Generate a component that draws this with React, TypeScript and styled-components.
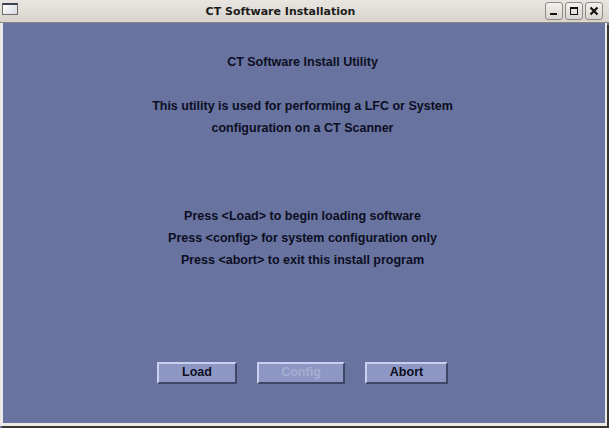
import React from "react";
import styled, { createGlobalStyle } from "styled-components";

const Global = createGlobalStyle`
  html, body { margin: 0; padding: 0; background: #3a3530; }
  body { width: 609px; height: 428px; overflow: hidden; }
`;

const Window = styled.div`
  width: 609px;
  height: 428px;
  display: flex;
  flex-direction: column;
  box-sizing: border-box;
  background: #6873a0;
`;

const TitleBar = styled.div`
  flex: none;
  display: flex;
  align-items: center;
  padding: 0 6px 0 2px;
  background: linear-gradient(#e9e6e2, #d8d3cc);
  border-bottom: 1px solid #8a8782;
  box-sizing: border-box;
  height: 23px;
`;

const AppIcon = styled.div`
  width: 16px;
  height: 12px;
  box-sizing: border-box;
  border: 1px solid #6e6b68;
  border-top: 2px solid #3c4250;
  background: linear-gradient(135deg, #ffffff, #d6d8de);
  margin-top: -4px;
`;

const Title = styled.div`
  flex: 1;
  text-align: center;
  font-family: "DejaVu Sans", sans-serif;
  font-weight: bold;
  font-size: 11px;
  color: #1c1c1c;
  padding-right: 2px;
  padding-top: 1px;
`;

const Controls = styled.div`
  display: flex;
  gap: 2px;
`;

const CtrlBtn = styled.div`
  width: 18px;
  height: 18px;
  box-sizing: border-box;
  border: 1px solid #8e8a84;
  border-radius: 3px;
  background: linear-gradient(#f3f1ee, #d8d4ce);
  display: flex;
  align-items: center;
  justify-content: center;
`;

const Body = styled.div`
  flex: 1;
  display: flex;
  flex-direction: column;
  align-items: center;
  border-left: 3px solid #eceae6;
  border-right: 2px solid #eceae6;
  border-bottom: 3px solid #eceae6;
  box-shadow: 2px 2px 0 #3a3530;
  margin-right: 2px;
  margin-bottom: 2px;
  padding-top: 28px;
  font-family: "Liberation Sans", Arial, sans-serif;
  font-weight: bold;
  font-size: 12.5px;
  color: #0c0e22;
`;

const TextBlock = styled.div<{ $mt: number }>`
  margin-top: ${(p) => p.$mt}px;
  text-align: center;
  line-height: 22px;
  padding-right: 3px;
`;

const ButtonRow = styled.div`
  display: flex;
  gap: 20px;
  margin-top: 91px;
  padding-right: 3px;
`;

const Button = styled.button<{ $w: number }>`
  width: ${(p) => p.$w}px;
  height: 22px;
  box-sizing: border-box;
  background: #8c97c3;
  border: 2px solid;
  border-color: #c9d0ef #3f4668 #3f4668 #c9d0ef;
  font-family: "Liberation Sans", Arial, sans-serif;
  font-weight: bold;
  font-size: 12.5px;
  color: #0c0e22;
  padding: 0 0 2px;
  &:disabled {
    color: #a6aed0;
  }
`;

const Min = () => (
  <svg width="10" height="10" viewBox="0 0 10 10">
    <rect x="1" y="7" width="7" height="2" fill="#111" />
  </svg>
);
const Max = () => (
  <svg width="10" height="10" viewBox="0 0 10 10">
    <rect x="1.5" y="1.5" width="7" height="7" fill="none" stroke="#111" strokeWidth="1" />
    <rect x="1" y="1" width="8" height="2" fill="#111" />
  </svg>
);
const Close = () => (
  <svg width="10" height="10" viewBox="0 0 10 10">
    <path d="M1.5 1.5 L8.5 8.5 M8.5 1.5 L1.5 8.5" stroke="#111" strokeWidth="2.2" />
  </svg>
);

export default function App() {
  return (
    <>
      <Global />
      <Window>
        <TitleBar>
          <AppIcon />
          <Title>CT Software Installation</Title>
          <Controls>
            <CtrlBtn><Min /></CtrlBtn>
            <CtrlBtn><Max /></CtrlBtn>
            <CtrlBtn><Close /></CtrlBtn>
          </Controls>
        </TitleBar>
        <Body>
          <TextBlock $mt={0}>CT Software Install Utility</TextBlock>
          <TextBlock $mt={22}>
            This utility is used for performing a LFC or System
            <br />
            configuration on a CT Scanner
          </TextBlock>
          <TextBlock $mt={66}>
            Press &lt;Load&gt; to begin loading software
            <br />
            Press &lt;config&gt; for system configuration only
            <br />
            Press &lt;abort&gt; to exit this install program
          </TextBlock>
          <ButtonRow>
            <Button $w={80}>Load</Button>
            <Button $w={88} disabled>Config</Button>
            <Button $w={83}>Abort</Button>
          </ButtonRow>
        </Body>
      </Window>
    </>
  );
}
